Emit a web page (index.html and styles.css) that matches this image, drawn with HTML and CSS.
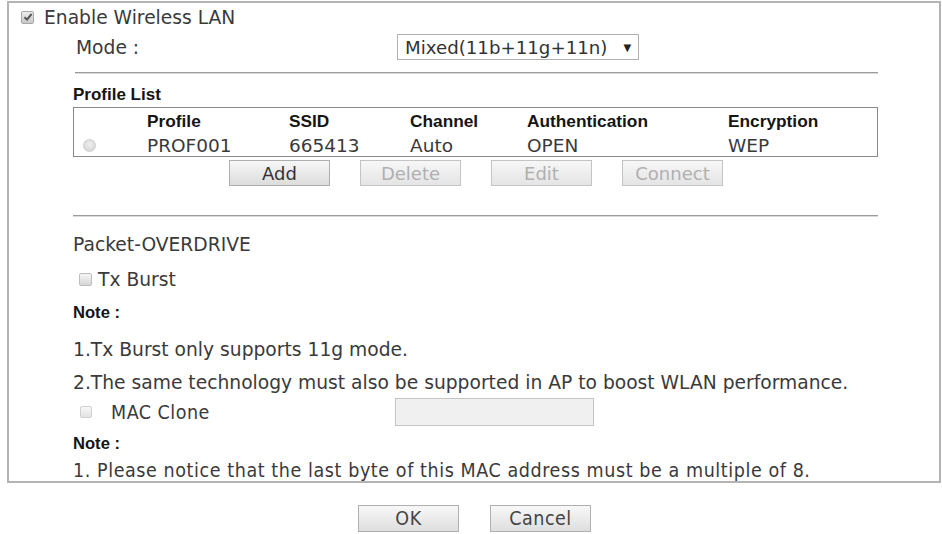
FILE: index.html
```html
<!DOCTYPE html>
<html>
<head>
<meta charset="utf-8">
<link rel="stylesheet" href="styles.css">
</head>
<body>
<div class="panel">
  <div class="row-enable">
    <span class="cb checked"><svg viewBox="0 0 12 12" width="12" height="12"><path d="M2.5 6.2 L5 8.6 L9.6 3" fill="none" stroke="#555" stroke-width="2"/></svg></span>
    <span class="txt">Enable Wireless LAN</span>
  </div>
  <div class="body">
    <div class="row-mode">
      <span class="mode-label">Mode :</span>
      <div class="select"><span>Mixed(11b+11g+11n)</span><span class="arrow">▼</span></div>
    </div>
    <div class="sep sep1"></div>
    <div class="title">Profile List</div>
    <div class="table">
      <div class="trow thead">
        <span></span><span>Profile</span><span>SSID</span><span>Channel</span><span>Authentication</span><span>Encryption</span>
      </div>
      <div class="trow tbody">
        <span><span class="radio"></span></span><span>PROF001</span><span>665413</span><span>Auto</span><span>OPEN</span><span>WEP</span>
      </div>
    </div>
    <div class="btns">
      <span class="btn">Add</span>
      <span class="btn disabled">Delete</span>
      <span class="btn disabled">Edit</span>
      <span class="btn disabled">Connect</span>
    </div>
    <div class="sep sep2"></div>
    <div class="section">
      <div class="line h34">Packet-OVERDRIVE</div>
      <div class="line h36 tx"><span class="cb"></span><span>Tx Burst</span></div>
      <div class="line h32 note">Note :</div>
      <div class="line h40">1.Tx Burst only supports 11g mode.</div>
      <div class="line h26">2.The same technology must also be supported in AP to boost WLAN performance.</div>
      <div class="line h34 mac"><span class="cb light"></span><span class="mac-label">MAC Clone</span><span class="mac-input"></span></div>
      <div class="line h30 note">Note :</div>
      <div class="line h22 narrow-txt">1. Please notice that the last byte of this MAC address must be a multiple of 8.</div>
    </div>
  </div>
</div>
<div class="actions">
  <span class="abtn">OK</span>
  <span class="abtn">Cancel</span>
</div>
</body>
</html>
```

FILE: styles.css
```css
html, body {
  margin: 0;
  padding: 0;
  background: #ffffff;
}
body {
  font-family: "DejaVu Sans", Verdana, sans-serif;
  font-size: 18.7px;
  color: #3a3a3a;
}
.panel {
  box-sizing: border-box;
  width: 934px;
  height: 482px;
  margin: 1px 0 0 7px;
  border: 2px solid #b4b4b4;
  padding: 0 0 0 12px;
}
.row-enable {
  height: 28px;
  display: flex;
  align-items: center;
}
.row-enable .txt {
  margin-left: 10px;
}
.cb {
  box-sizing: border-box;
  width: 12px;
  height: 12px;
  border: 1px solid #bdbdbd;
  border-radius: 2px;
  background: linear-gradient(#f6f6f6, #d6d6d6);
  display: inline-flex;
  align-items: center;
  justify-content: center;
  flex: none;
}
.cb.checked {
  width: 13px;
  height: 13px;
  border-color: #a8a8a8;
  background: linear-gradient(#ececec, #c8c8c8);
}
.cb svg {
  display: block;
  margin: -1px;
}
.cb.light {
  border-color: #d0d0d0;
  background: linear-gradient(#f8f8f8, #e2e2e2);
}
.body {
  margin-left: 52px;
}
.row-mode {
  height: 32px;
  display: flex;
  align-items: center;
  padding-left: 3px;
}
.mode-label {
  width: 321px;
  flex: none;
}
.select {
  box-sizing: border-box;
  width: 242px;
  height: 26px;
  border: 1px solid #b0b0b0;
  display: flex;
  align-items: center;
  padding-left: 7px;
  font-size: 18.2px;
  color: #333;
}
.select .arrow {
  font-size: 10px;
  margin-left: 16px;
  color: #222;
}
.sep {
  height: 0;
  border-top: 1px solid #9c9c9c;
  border-bottom: 1px solid #dadada;
}
.sep1 {
  margin: 9px 0 0 2px;
  width: 803px;
}
.title {
  margin-top: 11px;
  height: 20px;
  line-height: 20px;
  font-family: "Liberation Sans", Arial, sans-serif;
  font-weight: bold;
  font-size: 17px;
  color: #151515;
}
.table {
  box-sizing: border-box;
  margin-top: 2px;
  width: 805px;
  height: 50px;
  border: 1px solid #8a8a8a;
}
.trow {
  display: grid;
  grid-template-columns: 73px 142px 121px 117px 201px 1fr;
  align-items: center;
}
.thead {
  height: 26px;
  font-family: "Liberation Sans", Arial, sans-serif;
  font-weight: bold;
  font-size: 17.3px;
  color: #151515;
}
.tbody {
  height: 22px;
  color: #3a3a3a;
  font-size: 18.5px;
}
.radio {
  display: block;
  box-sizing: border-box;
  width: 13px;
  height: 13px;
  margin-left: 9px;
  border-radius: 50%;
  border: 1px solid #cfcfcf;
  background: radial-gradient(circle at 50% 40%, #f0f0f0, #cfcfcf);
}
.btns {
  margin-top: 3px;
  height: 26px;
  display: flex;
  gap: 30px;
  padding-left: 156px;
}
.btn {
  box-sizing: border-box;
  width: 101px;
  height: 26px;
  border: 1px solid #aeaeae;
  background: linear-gradient(#f7f7f7, #dcdcdc);
  display: flex;
  align-items: center;
  justify-content: center;
  color: #333;
  font-size: 18px;
}
.btn.disabled {
  color: #b0b0b0;
  border-color: #c4c4c4;
  background: linear-gradient(#f7f7f7, #e4e4e4);
}
.sep2 {
  margin-top: 29px;
  width: 805px;
}
.section {
  padding-top: 10px;
}
.line {
  display: flex;
  align-items: center;
  white-space: nowrap;
}
.h22 { height: 22px; }
.h26 { height: 26px; }
.h30 { height: 30px; }
.h32 { height: 32px; }
.h34 { height: 34px; }
.h36 { height: 36px; }
.h40 { height: 40px; }
.tx {
  padding-left: 6px;
}
.tx .cb {
  width: 13px;
  height: 13px;
  margin-right: 6px;
}
.note {
  font-family: "Liberation Sans", Arial, sans-serif;
  font-weight: bold;
  font-size: 16.6px;
  color: #151515;
}
.mac {
  padding-left: 7px;
}
.mac-label {
  margin-left: 19px;
  width: 284px;
  font-family: "DejaVu Sans Condensed", "DejaVu Sans", sans-serif;
  font-stretch: condensed;
  font-size: 19.5px;
  letter-spacing: 0.5px;
  color: #3a3a3a;
}
.mac-input {
  box-sizing: border-box;
  width: 199px;
  height: 28px;
  border: 1px solid #c4c4c4;
  background: #f0f0f0;
}
.narrow-txt {
  font-family: "DejaVu Sans Condensed", "DejaVu Sans", sans-serif;
  font-stretch: condensed;
  font-size: 19.5px;
  letter-spacing: 0.58px;
  color: #3a3a3a;
}
.actions {
  margin-top: 22px;
  display: flex;
  justify-content: center;
  gap: 31px;
  padding-left: 7px;
}
.abtn {
  box-sizing: border-box;
  width: 101px;
  height: 27px;
  border: 1px solid #b0b0b0;
  background: linear-gradient(#f8f8f8, #dedede);
  display: flex;
  align-items: center;
  justify-content: center;
  font-family: "DejaVu Sans Condensed", "DejaVu Sans", sans-serif;
  font-stretch: condensed;
  font-size: 19.5px;
  letter-spacing: 0.5px;
  color: #444;
}
```
